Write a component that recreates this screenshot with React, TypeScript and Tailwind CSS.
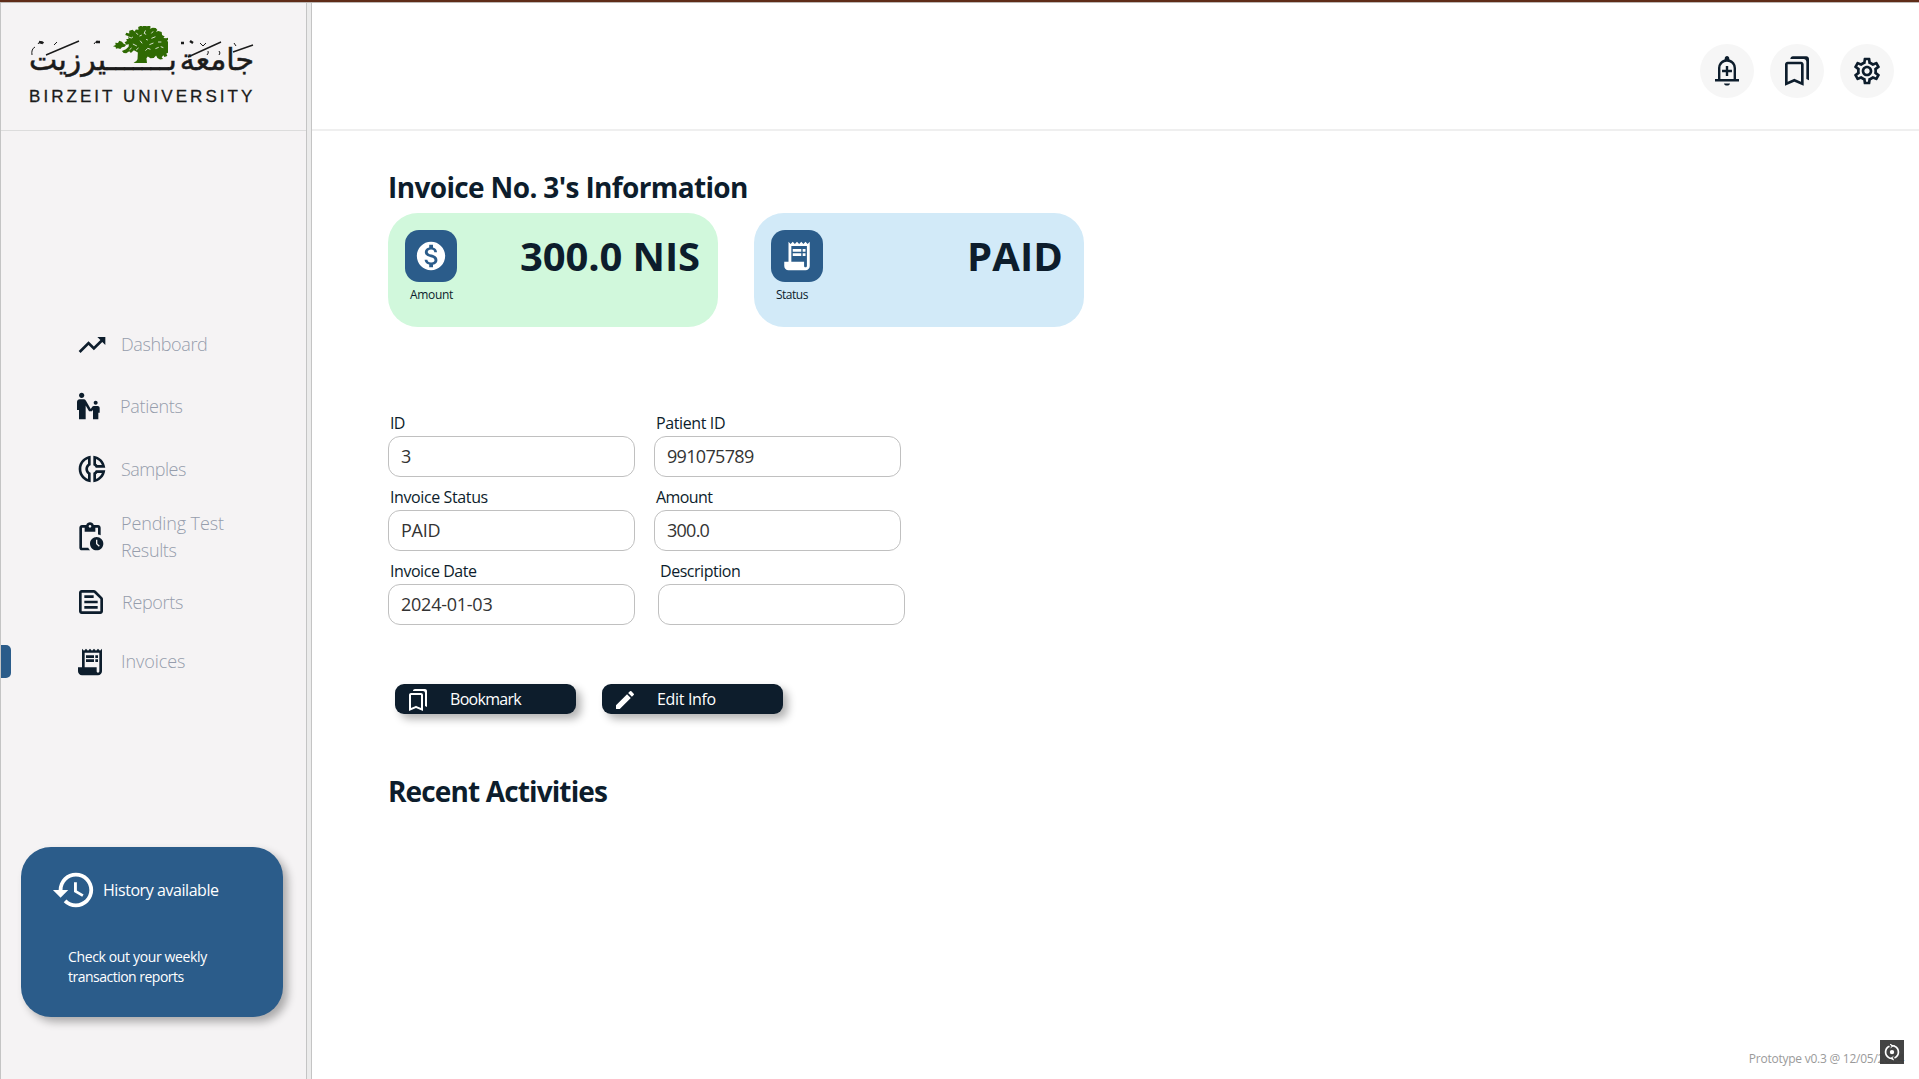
import React from 'react';
import type { ReactNode } from 'react';
import {
  MdTrendingUp, MdEscalatorWarning, MdOutlineDonutSmall, MdPendingActions, MdOutlineTextSnippet,
  MdReceiptLong, MdHistory, MdOutlineBookmarks, MdOutlineSettings, MdMonetizationOn, MdEdit,
} from 'react-icons/md';

function AddAlertIcon() {
  return (
    <svg viewBox="0 0 24 24" className="size-9" fill="currentColor">
      <path d="M4 19v-1.6h2V10q0-2.075 1.25-3.688T10.5 4.2v-.7q0-.625.438-1.062T12 2t1.063.438T13.5 3.5v.7q2 .5 3.25 2.113T18 10v7.4h2V19zm8 2.7q-.825 0-1.412-.4T10 20.3h4q0 .6-.587 1T12 21.7m-4.4-4.3h8.8V10q0-1.85-1.3-3T12 5.8 8.9 7 7.6 10zm3.6-2.1v-2.5H8.7v-1.6h2.5V8.7h1.6v2.5h2.5v1.6h-2.5v2.5z" />
    </svg>
  );
}

function Tree() {
  return (
    <svg viewBox="280 30 166 111" className="absolute left-[90px] top-[6px] h-[37px] w-[55px]" fill="#2f6a03">
      <path d="M280 91l8-4-1-7 8 1 4-7 8 3 5 6 8 3-5 6-8 2-5 5-7-2-6 1-1-5z" />
      <path d="M342 140q10-3 12-10l1-20-12-7-9 8-5-5-9 6-8-1-5-6 12-5 8-8 1-7-8 1-5-7 7-4-2-6 7 0-2-9-8-3 3-7 9 2 0-8 10-3 6 5 4-6 8 1-1-8 8-4 6 2 4-4 9 4 3-5 8 6-3 6 9-3 9 1 5 6-5 5 8-2 10 3 1 9 8 4-4 5 9 1 7-3 2 6-7 4 6 6 9 1-3 6-9 0 3 6 7 4-2 6-8-1 2 7-7 4 3 7-9 3-3-5-5 6 4 5-9 2-8-5-4-7-7 7-10 1-8-5-4 5 2 18q3 8 13 10z" />
      <g stroke="#f5f3f4" strokeWidth="2.6" fill="none">
        <path d="M326 62l9 4 5-3M350 50l5 6M378 43l-4 9 6 3M408 62l-12 5M340 84l12 6M362 74l6 8M390 86l12-5M416 78l10 0M350 102l7-6M378 104l7-7 8 3M408 98l10-4M360 60l7-3M396 52l5-6M424 92l8 3M336 96l-6 5M380 70l5 2" />
      </g>
    </svg>
  );
}

function Flourishes() {
  return (
    <svg viewBox="28 38 226 44" className="absolute left-[6px] top-[18px] h-[44px] w-[226px]" fill="none" stroke="#1b1b1b">
      <path strokeWidth="1.4" d="M45 55L78 41M187 57L220 42M232 52L252 45" />
      <path strokeWidth="1" d="M37 44q2-4 6-1M53 45l3-3M93 44q3-5 6-1M199 43l3 3 3-3M233 43l2 3M31 55q-1-6 3-8M206 55q2-2 1-4M218 55q2-2 0-4" />
      <path strokeWidth="2.4" d="M38 42l4 1M95 42l4 0M180 43l3 0M189 41l3 2" />
    </svg>
  );
}

function Logo() {
  return (
    <div className="relative ml-[22px] mt-[17px] h-[84px] w-[236px]">
      <Flourishes />
      <div dir="rtl" className="flex h-[64px] w-[231px] items-end justify-between whitespace-nowrap pl-[6px] font-['DejaVu_Sans',sans-serif] text-[30px] leading-[48px] text-[#1b1b1b] [-webkit-text-stroke:0.5px_#1b1b1b]">
        <span>جامعة</span>
        <span>بـــــــيرزيت</span>
      </div>
      <Tree />
      <div className="mt-[2px] whitespace-nowrap pl-[6px] font-['Liberation_Sans',sans-serif] text-[17px] leading-[22px] tracking-[3.04px] text-[#1b1b1b] [-webkit-text-stroke:0.3px_#1b1b1b]">BIRZEIT UNIVERSITY</div>
    </div>
  );
}

type NavProps = { icon: ReactNode; children: ReactNode; className: string; label: string };
function NavItem({ icon, children, className, label }: NavProps) {
  return (
    <a className={`flex items-center ${className}`}>
      <span className="w-8 shrink-0 text-[32px]">{icon}</span>
      <span className={`whitespace-nowrap text-lg font-light leading-[27px] text-[#969dac] ${label}`}>{children}</span>
    </a>
  );
}

function Sidebar() {
  return (
    <aside className="flex w-[312px] shrink-0 border-x border-[#c4c4c4] bg-[#ebebeb]">
      <div className="flex w-[306px] flex-col border-r border-[#c4c4c4] bg-[#f5f3f4]">
        <div className="h-[128px] border-b border-[#dcdcdc]">
          <Logo />
        </div>
        <nav className="flex h-[716px] flex-col pt-[198px] text-[#0d1d2c]">
          <NavItem className="h-8 pl-[75px]" label="ml-[13px] mb-[2px] tracking-[-0.38px]" icon={<MdTrendingUp />}>Dashboard</NavItem>
          <NavItem className="mt-[29px] h-8 pl-[72px]" label="ml-[15px] tracking-[-0.31px]" icon={<MdEscalatorWarning />}>Patients</NavItem>
          <NavItem className="mt-[31px] h-8 pl-[75px]" label="ml-[13px] tracking-[-0.49px]" icon={<MdOutlineDonutSmall />}>Samples</NavItem>
          <NavItem className="mt-[25px] h-[54px] pl-[73px]" label="ml-[15px] tracking-[-0.11px]" icon={<MdPendingActions />}>Pending Test<br /><span className="tracking-[-0.36px]">Results</span></NavItem>
          <NavItem className="mt-[22px] h-8 pl-[74px]" label="ml-[15px] tracking-[-0.31px]" icon={<MdOutlineTextSnippet />}>Reports</NavItem>
          <div className="mt-[27px] flex h-[33px]">
            <span className="w-[10px] rounded-r-[5px] bg-[#2b5c8a]" />
            <NavItem className="h-[33px] pl-[63px]" label="ml-[15px] tracking-[-0.07px]" icon={<MdReceiptLong />}>Invoices</NavItem>
          </div>
        </nav>
        <section className="ml-5 h-[170px] w-[262px] rounded-[30px] bg-[#2b5c8a] pt-5 text-white shadow-[5px_5px_9px_rgba(0,0,0,0.3)]">
          <div className="flex h-[46px] items-center pl-[30px]">
            <MdHistory className="size-[46px]" />
            <span className="ml-[6px] whitespace-nowrap text-base tracking-[-0.44px]">History available</span>
          </div>
          <p className="mt-[34px] whitespace-nowrap pl-[47px] text-sm leading-5 tracking-[-0.36px]">
            Check out your weekly<br /><span className="tracking-[-0.51px]">transaction reports</span>
          </p>
        </section>
      </div>
    </aside>
  );
}

function RoundButton({ children }: { children: ReactNode }) {
  return <button className="flex size-[54px] items-center justify-center rounded-full bg-[#f6f6f6] text-[32px]">{children}</button>;
}

type StatProps = { icon: ReactNode; label: string; value: string; tone: string; labelClass: string; valueClass: string };
function StatCard({ icon, label, value, tone, labelClass, valueClass }: StatProps) {
  return (
    <div className={`flex h-[114px] w-[330px] justify-between rounded-[30px] pl-[17px] pt-[17px] ${tone}`}>
      <div>
        <div className="flex size-[52px] items-center justify-center rounded-[14px] bg-[#2b5c8a] text-[34px] text-white">{icon}</div>
        <div className={`mt-[5px] text-xs leading-4 ${labelClass}`}>{label}</div>
      </div>
      <div className={`whitespace-nowrap text-[40px] font-bold leading-[51px] ${valueClass}`}>{value}</div>
    </div>
  );
}

type FieldProps = { label: string; value: string; labelClass?: string; valueClass?: string };
function Field({ label, value, labelClass = '', valueClass = '' }: FieldProps) {
  return (
    <label className="block w-[247px]">
      <span className={`block h-7 text-base leading-[30px] ${labelClass}`}>{label}</span>
      <span className={`block h-[41px] rounded-[12px] border border-[#c0c0c0] pl-3 text-lg leading-[39px] text-[#333] ${valueClass}`}>{value}</span>
    </label>
  );
}

function ActionButton({ icon, children, labelClass }: { icon: ReactNode; children: ReactNode; labelClass: string }) {
  return (
    <button className="flex h-[30px] w-[181px] items-center rounded-[9px] bg-[#0d1d2c] pl-[11px] text-white shadow-[5px_5px_8px_rgba(0,0,0,0.3)]">
      <span className="mt-[2px] text-2xl">{icon}</span>
      <span className={`ml-5 whitespace-nowrap text-base leading-[30px] ${labelClass}`}>{children}</span>
    </button>
  );
}

export default function App() {
  return (
    <div className="flex h-[1079px] w-[1919px] flex-col overflow-hidden border-t-2 border-[#5f2c18] bg-white font-['Open_Sans','Noto_Sans',sans-serif] text-[#0d1d2c]">
      <div className="flex min-h-0 flex-1 border-t border-[#bdb8b5]">
        <Sidebar />
        <div className="relative flex flex-1 flex-col">
          <header className="flex h-[128px] shrink-0 justify-end gap-4 border-b-2 border-[#efefef] pr-[25px] pt-[41px]">
            <RoundButton><AddAlertIcon /></RoundButton>
            <RoundButton><MdOutlineBookmarks /></RoundButton>
            <RoundButton><MdOutlineSettings /></RoundButton>
          </header>
          <main className="flex-1 pl-[76px] pt-[41px]">
            <h1 className="h-7 text-[28px] font-bold leading-[30px] tracking-[-0.64px]">Invoice No. 3's Information</h1>
            <div className="mt-[13px] flex gap-9">
              <StatCard tone="bg-[#d1f8dc]" icon={<MdMonetizationOn />} label="Amount" value="300.0 NIS" labelClass="pl-[5px] tracking-[-0.33px]" valueClass="pr-[18px] tracking-[-0.13px]" />
              <StatCard tone="bg-[#d2eaf8]" icon={<MdReceiptLong />} label="Status" value="PAID" labelClass="pl-[5px] tracking-[-0.5px]" valueClass="pr-[21px] tracking-[0.1px]" />
            </div>
            <div className="mt-[81px] flex flex-col gap-[5px]">
              <div className="flex gap-[19px]">
                <Field label="ID" value="3" labelClass="pl-[2px] tracking-[-0.6px]" />
                <Field label="Patient ID" value="991075789" labelClass="pl-[2px] tracking-[-0.38px]" valueClass="tracking-[-0.67px]" />
              </div>
              <div className="flex gap-[19px]">
                <Field label="Invoice Status" value="PAID" labelClass="pl-[2px] tracking-[-0.39px]" valueClass="tracking-[-0.25px]" />
                <Field label="Amount" value="300.0" labelClass="pl-[2px] tracking-[-0.6px]" valueClass="tracking-[-0.75px]" />
              </div>
              <div className="flex gap-[23px]">
                <Field label="Invoice Date" value="2024-01-03" labelClass="pl-[2px] tracking-[-0.45px]" valueClass="tracking-[-0.25px]" />
                <Field label="Description" value="" labelClass="pl-[2px] tracking-[-0.46px]" />
              </div>
            </div>
            <div className="ml-[7px] mt-[59px] flex gap-[26px]">
              <ActionButton icon={<MdOutlineBookmarks />} labelClass="tracking-[-0.7px]">Bookmark</ActionButton>
              <ActionButton icon={<MdEdit />} labelClass="tracking-[-0.34px]">Edit Info</ActionButton>
            </div>
            <h2 className="mt-[62px] h-7 text-[28px] font-bold leading-[30px] tracking-[-0.87px]">Recent Activities</h2>
          </main>
          <footer className="flex justify-end pb-3 pr-[15px] text-xs leading-4 tracking-[-0.25px] text-[#9a9a9a]">Prototype v0.3 @ 12/05/2024</footer>
          <div className="absolute bottom-[15px] right-[15px] size-6 bg-[#3a3a3a]/95">
            <svg viewBox="0 0 24 24" className="size-6" fill="none" stroke="#fff" strokeWidth="1.7">
              <path d="M9.5 6.2a6.4 6.4 0 0 0 0 11.8M14.5 6.2a6.4 6.4 0 0 1 0 11.8M9 18l4.2.6M15 6.1l-4.2-.6" />
              <path d="M10 4.2l3 1.6-2.4 2M14 20l-3-1.6 2.4-2" strokeWidth="1" />
              <circle cx="12" cy="12.1" r="2.2" fill="#fff" stroke="none" />
            </svg>
          </div>
        </div>
      </div>
    </div>
  );
}
